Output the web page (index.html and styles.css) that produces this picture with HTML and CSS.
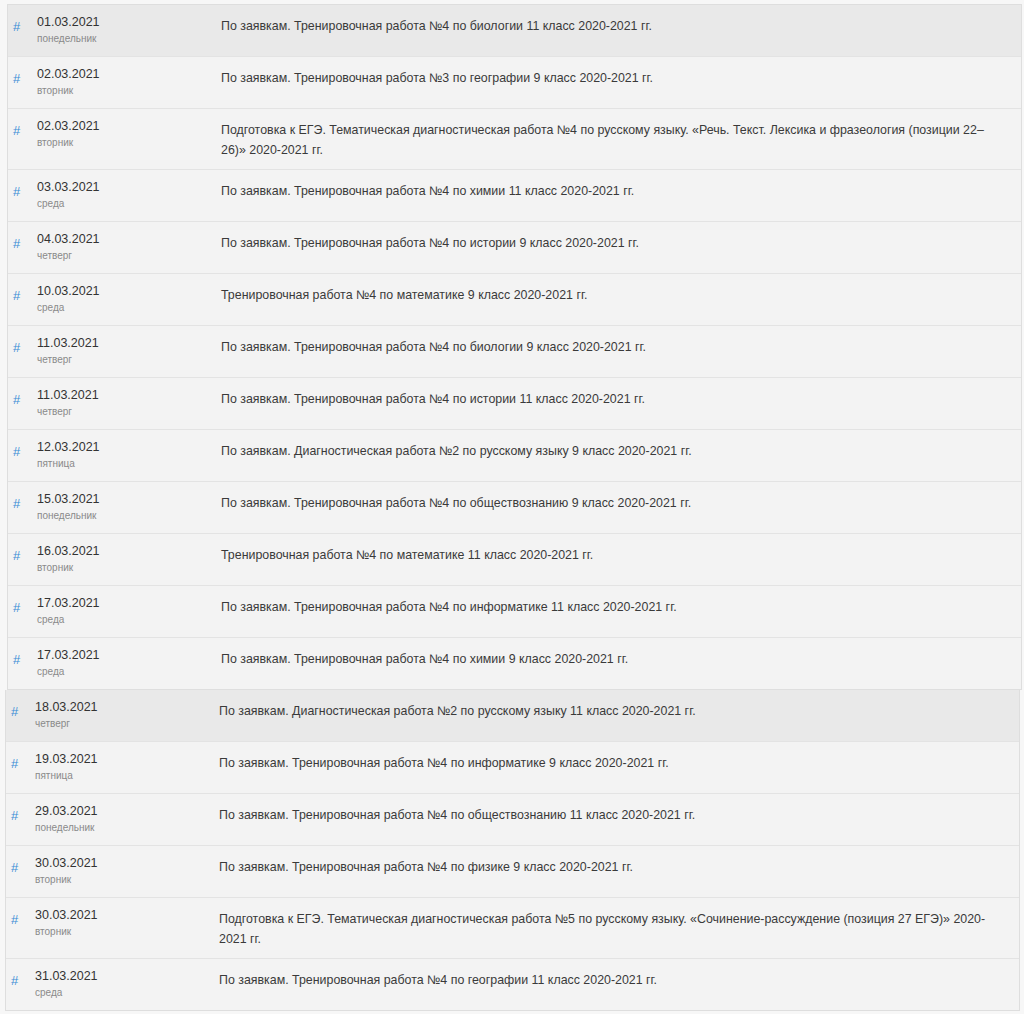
FILE: index.html
```html
<!DOCTYPE html>
<html lang="ru">
<head>
  <meta charset="UTF-8" />
  <meta name="viewport" content="width=device-width, initial-scale=1.0"/>
  <title>Расписание работ</title>
  <link rel="stylesheet" href="styles.css">
</head>
<body>
  <div class="schedule top">
    <div class="row active">
      <a class="anchor">#</a>
      <div class="date">01.03.2021<span>понедельник</span></div>
      <div class="title">По заявкам. Тренировочная работа №4 по биологии 11 класс 2020-2021 гг.</div>
    </div>
    <div class="row">
      <a class="anchor">#</a>
      <div class="date">02.03.2021<span>вторник</span></div>
      <div class="title">По заявкам. Тренировочная работа №3 по географии 9 класс 2020-2021 гг.</div>
    </div>
    <div class="row">
      <a class="anchor">#</a>
      <div class="date">02.03.2021<span>вторник</span></div>
      <div class="title">Подготовка к ЕГЭ. Тематическая диагностическая работа №4 по русскому языку. «Речь. Текст. Лексика и фразеология (позиции 22–26)» 2020-2021 гг.</div>
    </div>
    <div class="row">
      <a class="anchor">#</a>
      <div class="date">03.03.2021<span>среда</span></div>
      <div class="title">По заявкам. Тренировочная работа №4 по химии 11 класс 2020-2021 гг.</div>
    </div>
    <div class="row">
      <a class="anchor">#</a>
      <div class="date">04.03.2021<span>четверг</span></div>
      <div class="title">По заявкам. Тренировочная работа №4 по истории 9 класс 2020-2021 гг.</div>
    </div>
    <div class="row">
      <a class="anchor">#</a>
      <div class="date">10.03.2021<span>среда</span></div>
      <div class="title">Тренировочная работа №4 по математике 9 класс 2020-2021 гг.</div>
    </div>
    <div class="row">
      <a class="anchor">#</a>
      <div class="date">11.03.2021<span>четверг</span></div>
      <div class="title">По заявкам. Тренировочная работа №4 по биологии 9 класс 2020-2021 гг.</div>
    </div>
    <div class="row">
      <a class="anchor">#</a>
      <div class="date">11.03.2021<span>четверг</span></div>
      <div class="title">По заявкам. Тренировочная работа №4 по истории 11 класс 2020-2021 гг.</div>
    </div>
    <div class="row">
      <a class="anchor">#</a>
      <div class="date">12.03.2021<span>пятница</span></div>
      <div class="title">По заявкам. Диагностическая работа №2 по русскому языку 9 класс 2020-2021 гг.</div>
    </div>
    <div class="row">
      <a class="anchor">#</a>
      <div class="date">15.03.2021<span>понедельник</span></div>
      <div class="title">По заявкам. Тренировочная работа №4 по обществознанию 9 класс 2020-2021 гг.</div>
    </div>
    <div class="row">
      <a class="anchor">#</a>
      <div class="date">16.03.2021<span>вторник</span></div>
      <div class="title">Тренировочная работа №4 по математике 11 класс 2020-2021 гг.</div>
    </div>
    <div class="row">
      <a class="anchor">#</a>
      <div class="date">17.03.2021<span>среда</span></div>
      <div class="title">По заявкам. Тренировочная работа №4 по информатике 11 класс 2020-2021 гг.</div>
    </div>
    <div class="row">
      <a class="anchor">#</a>
      <div class="date">17.03.2021<span>среда</span></div>
      <div class="title">По заявкам. Тренировочная работа №4 по химии 9 класс 2020-2021 гг.</div>
    </div>
  </div>

  <div class="schedule bottom">
    <div class="row active">
      <a class="anchor">#</a>
      <div class="date">18.03.2021<span>четверг</span></div>
      <div class="title">По заявкам. Диагностическая работа №2 по русскому языку 11 класс 2020-2021 гг.</div>
    </div>
    <div class="row">
      <a class="anchor">#</a>
      <div class="date">19.03.2021<span>пятница</span></div>
      <div class="title">По заявкам. Тренировочная работа №4 по информатике 9 класс 2020-2021 гг.</div>
    </div>
    <div class="row">
      <a class="anchor">#</a>
      <div class="date">29.03.2021<span>понедельник</span></div>
      <div class="title">По заявкам. Тренировочная работа №4 по обществознанию 11 класс 2020-2021 гг.</div>
    </div>
    <div class="row">
      <a class="anchor">#</a>
      <div class="date">30.03.2021<span>вторник</span></div>
      <div class="title">По заявкам. Тренировочная работа №4 по физике 9 класс 2020-2021 гг.</div>
    </div>
    <div class="row">
      <a class="anchor">#</a>
      <div class="date">30.03.2021<span>вторник</span></div>
      <div class="title">Подготовка к ЕГЭ. Тематическая диагностическая работа №5 по русскому языку. «Сочинение-рассуждение (позиция 27 ЕГЭ)» 2020-2021 гг.</div>
    </div>
    <div class="row">
      <a class="anchor">#</a>
      <div class="date">31.03.2021<span>среда</span></div>
      <div class="title">По заявкам. Тренировочная работа №4 по географии 11 класс 2020-2021 гг.</div>
    </div>
  </div>
</body>
</html>
```

FILE: styles.css
```css
body {
  margin: 0;
  padding: 4px 0 0;
  background: #f7f7f7;
  font-family: "Liberation Sans", Arial, sans-serif;
  color: #333;
}
.schedule {
  border: 1px solid #dedede;
  background: #f3f3f3;
}
.schedule.top {
  margin: 0 2px 0 7px;
}
.schedule.bottom {
  margin: 0 4px 0 5px;
  border-top: none;
}
.row {
  display: grid;
  grid-template-columns: 24px 184px 1fr;
  border-bottom: 1px solid #e3e3e3;
  min-height: 51px;
}
.row:last-child {
  border-bottom: none;
}
.row.active {
  background: #e9e9e9;
}
.anchor {
  color: #3a8ed6;
  font-size: 13px;
  padding: 14px 0 0 5px;
}
.date {
  font-size: 12.5px;
  line-height: 16px;
  padding: 9px 0 0 5px;
}
.date span {
  display: block;
  font-size: 10px;
  line-height: 17px;
  color: #8a8a8a;
}
.title {
  font-size: 12.4px;
  line-height: 20px;
  color: #3a3a3a;
  padding: 11px 20px 9px 5px;
}
```
